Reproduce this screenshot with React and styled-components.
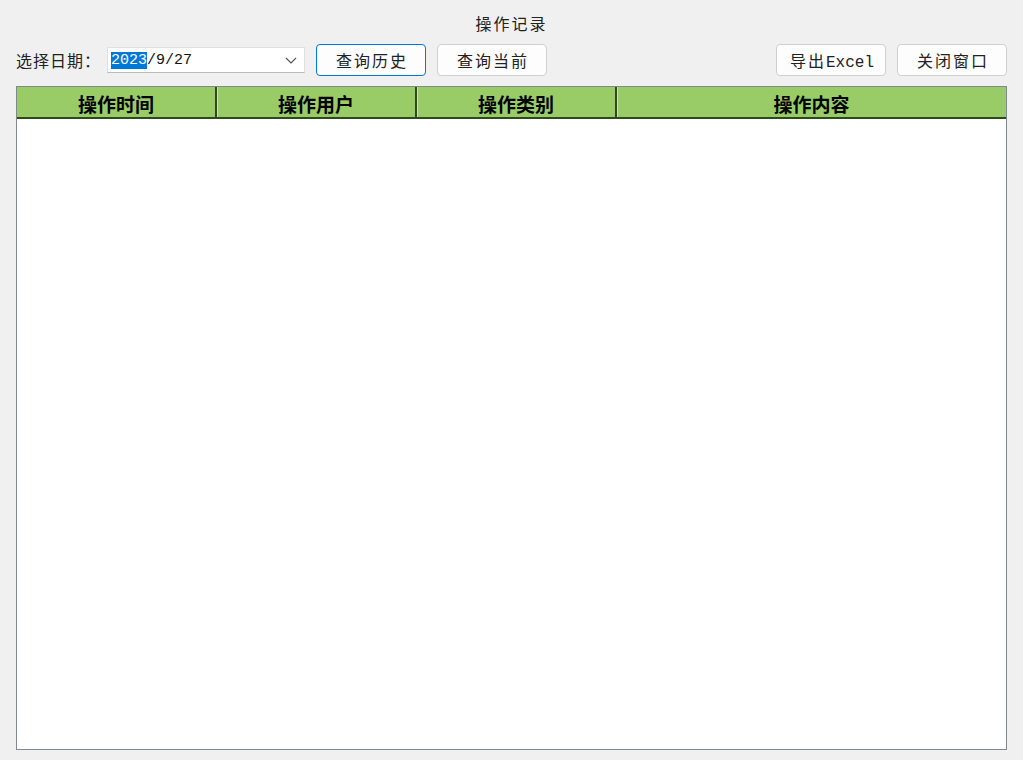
import styled, { createGlobalStyle } from 'styled-components';

const GlobalStyle = createGlobalStyle`
    html, body {
        margin: 0;
        padding: 0;
        background: #f0f0f0;
        font-family: "Noto Sans CJK SC", sans-serif;
    }
    * {
        box-sizing: border-box;
    }
`;

const Page = styled.div`
    width: 1023px;
    height: 760px;
    display: flex;
    flex-direction: column;
    padding: 12px 16px 10px 16px;
    background: #f0f0f0;
`;

const Title = styled.div`
    text-align: center;
    font-size: 16px;
    line-height: 22px;
    height: 22px;
    color: #222;
    letter-spacing: 2px;
`;

const Toolbar = styled.div`
    display: flex;
    align-items: center;
    height: 32px;
    margin-top: 10px;
`;

const Label = styled.span`
    font-size: 16px;
    color: #222;
    margin-right: 6px;
    letter-spacing: 1px;
`;

const DatePicker = styled.div`
    width: 198px;
    height: 26px;
    background: #fff;
    border: 1px solid #e0e0e0;
    border-bottom-color: #bbb;
    display: flex;
    align-items: center;
    padding: 0 6px 0 3px;
    font-family: "Liberation Mono", monospace;
    font-size: 15px;
    color: #111;
`;

const Selected = styled.span`
    background: #0078d7;
    color: #fff;
`;

const DateRest = styled.span`
    flex: 1;
`;

const Chevron = styled.svg`
    width: 14px;
    height: 14px;
`;

const Button = styled.button`
    width: 110px;
    height: 32px;
    background: #fdfdfd;
    border: 1px solid ${p => (p.$active ? '#0078d7' : '#d0d0d0')};
    border-radius: 4px;
    font-family: "Noto Sans CJK SC", sans-serif;
    font-size: 16px;
    color: #222;
    letter-spacing: 2px;
    margin-left: ${p => p.$gap || 0}px;
    padding: 0 0 0 2px;
`;

const Latin = styled.span`
    font-family: "Liberation Mono", monospace;
    font-size: 16px;
    letter-spacing: 0;
`;

const Spacer = styled.div`
    flex: 1;
`;

const Table = styled.div`
    margin-top: 10px;
    flex: 1;
    background: #fff;
    border: 1px solid #838790;
    display: flex;
    flex-direction: column;
`;

const HeaderRow = styled.div`
    display: grid;
    grid-template-columns: 200px 200px 200px 1fr;
    height: 32px;
    background: #99cc66;
    border-bottom: 2px solid #2c4a1e;
`;

const HeaderCell = styled.div`
    display: flex;
    align-items: center;
    justify-content: center;
    padding-top: 3px;
    font-size: 19px;
    font-weight: 700;
    color: #000;
    border-right: ${p => (p.$last ? 'none' : '2px solid #2c4a1e')};
    box-shadow: ${p => (p.$first ? 'none' : 'inset 1px 0 0 #c8e8a8')};
`;

const columns = ['操作时间', '操作用户', '操作类别', '操作内容'];

const App = () => {
    return (
        <Page>
            <GlobalStyle />
            <Title>操作记录</Title>
            <Toolbar>
                <Label>选择日期：</Label>
                <DatePicker>
                    <Selected>2023</Selected>
                    <DateRest>/9/27</DateRest>
                    <Chevron viewBox="0 0 14 14">
                        <path d="M2 5 L7 10 L12 5" fill="none" stroke="#555" strokeWidth="1.2" />
                    </Chevron>
                </DatePicker>
                <Button $active $gap={11}>查询历史</Button>
                <Button $gap={11}>查询当前</Button>
                <Spacer />
                <Button>导出<Latin>Excel</Latin></Button>
                <Button $gap={11}>关闭窗口</Button>
            </Toolbar>
            <Table>
                <HeaderRow>
                    {columns.map((c, i) => (
                        <HeaderCell key={c} $first={i === 0} $last={i === columns.length - 1}>
                            {c}
                        </HeaderCell>
                    ))}
                </HeaderRow>
            </Table>
        </Page>
    );
};

export default App;
